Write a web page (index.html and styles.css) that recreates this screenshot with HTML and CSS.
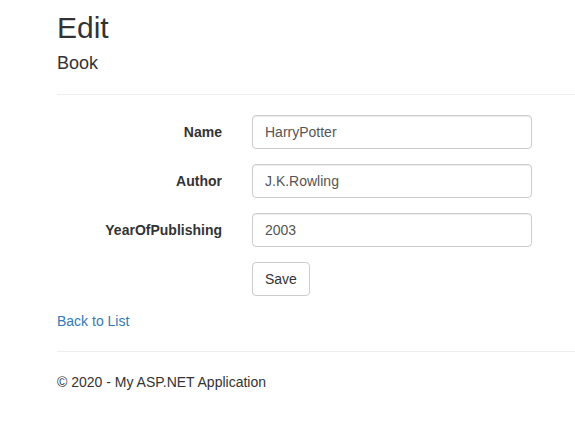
FILE: index.html
```html
<!DOCTYPE html>
<html>
<head>
<meta charset="utf-8">
<title>Edit</title>
<link rel="stylesheet" href="styles.css">
</head>
<body>
<div class="body-content">
  <h2 class="title">Edit</h2>
  <h4 class="subtitle">Book</h4>
  <hr class="rule">
  <form class="form-horizontal">
    <div class="form-group">
      <label class="control-label">Name</label>
      <div class="field"><input class="form-control" type="text" value="HarryPotter"></div>
    </div>
    <div class="form-group">
      <label class="control-label">Author</label>
      <div class="field"><input class="form-control" type="text" value="J.K.Rowling"></div>
    </div>
    <div class="form-group">
      <label class="control-label">YearOfPublishing</label>
      <div class="field"><input class="form-control" type="text" value="2003"></div>
    </div>
    <div class="form-group">
      <span class="control-label"></span>
      <div class="field"><button type="button" class="btn">Save</button></div>
    </div>
  </form>
  <div class="back"><a href="#" class="link">Back to List</a></div>
  <hr class="rule">
  <footer class="footer">
    <p class="copy">© 2020 - My ASP.NET Application</p>
  </footer>
</div>
</body>
</html>
```

FILE: styles.css
```css
* { box-sizing: border-box; }
html, body {
  margin: 0;
  padding: 0;
  background: #fff;
}
body {
  font-family: "Liberation Sans", Arial, Helvetica, sans-serif;
  font-size: 14px;
  line-height: 1.42857143;
  color: #333;
}
.body-content {
  padding-left: 57px;
}
.title {
  font-size: 30px;
  font-weight: 500;
  line-height: 1.1;
  margin: 11px 0 10px;
}
.subtitle {
  font-size: 18px;
  font-weight: 500;
  line-height: 1.1;
  margin: 10px 0 10px;
}
.rule {
  margin: 20px 0;
  border: 0;
  border-top: 1px solid #eee;
  height: 0;
}
.form-horizontal { margin: 0; }
.form-group {
  display: flex;
  gap: 30px;
  margin-bottom: 15px;
}
.control-label {
  width: 165px;
  flex: none;
  text-align: right;
  font-weight: 700;
  padding-top: 7px;
}
.field { width: 280px; flex: none; }
.form-control {
  display: block;
  width: 280px;
  height: 34px;
  padding: 6px 12px;
  font-family: inherit;
  font-size: 14px;
  line-height: 1.42857143;
  color: #555;
  background: #fff;
  border: 1px solid #ccc;
  border-radius: 4px;
  box-shadow: inset 0 1px 1px rgba(0,0,0,.075);
  margin: 0;
}
.btn {
  display: inline-block;
  height: 34px;
  padding: 6px 12px;
  font-family: inherit;
  font-size: 14px;
  line-height: 1.42857143;
  color: #333;
  background: #fff;
  border: 1px solid #ccc;
  border-radius: 4px;
  margin: 0;
  cursor: pointer;
}
.back { line-height: 20px; }
.link { color: #337ab7; text-decoration: none; }
.footer { margin: 0; }
.copy { margin: 0 0 10px; }
```
